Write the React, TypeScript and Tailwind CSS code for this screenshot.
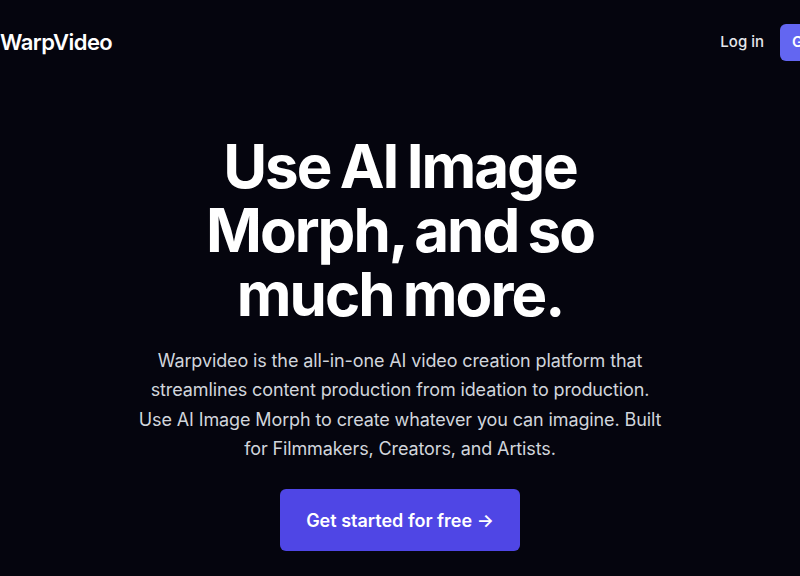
export default function App() {
  return (
    <div
      className="min-h-screen w-full overflow-hidden bg-[#05050e] text-white"
      style={{ fontFamily: 'Inter, "Noto Sans", sans-serif' }}
    >
      {/* Header */}
      <header className="w-[885px]">
        <nav className="flex h-[84px] items-center justify-between">
          <span className="text-[22px] font-semibold tracking-tight text-white">
            WarpVideo
          </span>
          <div className="flex items-center gap-4">
            <a href="#" className="text-[15px] font-medium text-gray-200">
              Log in
            </a>
            <a
              href="#"
              className="flex h-[37px] items-center rounded-md bg-[#6366f1] px-3 text-[15px] font-semibold text-white"
            >
              Get started
            </a>
          </div>
        </nav>
      </header>

      {/* Hero */}
      <main className="flex flex-col items-center px-4 pt-[50px] text-center">
        <h1 className="max-w-[520px] text-[60px] font-bold leading-[64px] tracking-[-0.033em] [word-spacing:-3px] text-white">
          Use AI Image Morph, and so much more.
        </h1>
        <p className="mt-5 max-w-[530px] text-[18px] leading-[29.25px] tracking-[-0.12px] text-gray-300">
          Warpvideo is the all-in-one AI video creation platform that
          streamlines content production from ideation to production. Use AI
          Image Morph to create whatever you can imagine. Built for Filmmakers,
          Creators, and Artists.
        </p>
        <a
          href="#"
          className="mt-[26px] flex h-[62px] w-[240px] items-center justify-center rounded-md bg-[#4f46e5] text-[18px] font-semibold text-white"
        >
          Get started for free →
        </a>
      </main>
    </div>
  );
}
